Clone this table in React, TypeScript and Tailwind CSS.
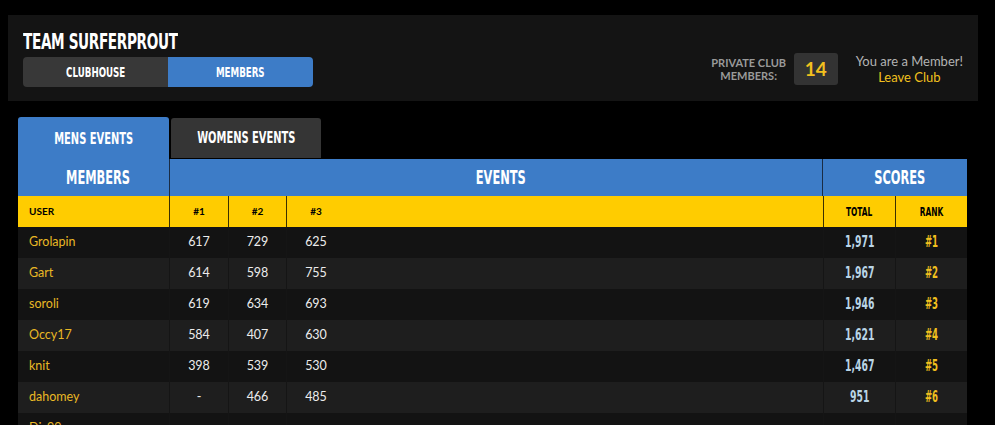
import React from "react";

const ROWS = [
  { name: "Grolapin", e: ["617", "729", "625"], total: "1,971", rank: "#1" },
  { name: "Gart", e: ["614", "598", "755"], total: "1,967", rank: "#2" },
  { name: "soroli", e: ["619", "634", "693"], total: "1,946", rank: "#3" },
  { name: "Occy17", e: ["584", "407", "630"], total: "1,621", rank: "#4" },
  { name: "knit", e: ["398", "539", "530"], total: "1,467", rank: "#5" },
  { name: "dahomey", e: ["-", "466", "485"], total: "951", rank: "#6" },
  { name: "Dj_99", e: ["", "", ""], total: "", rank: "" },
];

const cols = "grid grid-cols-[152px_59px_58px_58px_479px_72px_71px]";

const SCALE = {
  normal: "scale-x-[0.62]",
  tight: "scale-x-[0.57]",
};

// heavy condensed display type, squeezed from DejaVu Sans Bold
function Cond({
  children,
  left,
  tight,
}: {
  children: React.ReactNode;
  left?: boolean;
  tight?: boolean;
}) {
  return (
    <span
      className={`inline-block whitespace-nowrap font-['DejaVu_Sans',sans-serif] font-bold uppercase ${
        tight ? SCALE.tight : SCALE.normal
      } ${left ? "origin-left" : "origin-center"}`}
    >
      {children}
    </span>
  );
}

export default function App() {
  return (
    <div className="h-[425px] overflow-hidden bg-black font-['Lato',sans-serif]">
      {/* Club header */}
      <div className="mx-2 mt-[15px] w-[970px] h-[86px] bg-[#141414] flex justify-between px-[15px]">
        <div className="pt-[13px]">
          <h1 className="text-white text-[22px] leading-[25px] tracking-[-0.6px]">
            <Cond left>Team Surferprout</Cond>
          </h1>
          <div className="mt-[3px] flex w-[290px] h-[30px] rounded-[4px] overflow-hidden">
            <button className="w-[145px] bg-[#383838] text-white text-[14px] flex items-center justify-center">
              <Cond>Clubhouse</Cond>
            </button>
            <button className="w-[145px] bg-[#3d7cc7] text-white text-[14px] flex items-center justify-center">
              <Cond>Members</Cond>
            </button>
          </div>
        </div>
        <div className="flex items-center pt-[22px]">
          <div className="text-[#9a9a9a] text-[11px] leading-[13px] font-bold uppercase text-center w-[76px]">
            Private Club
            <br />
            Members:
          </div>
          <div className="ml-[7px] w-[44px] h-[32px] rounded-[3px] bg-[#333333] text-[#f2c01e] text-[19px] font-bold flex items-center justify-center">
            14
          </div>
          <div className="ml-[18px] text-center text-[13px] leading-[16px]">
            <div className="text-[#b3b3b3]">You are a Member!</div>
            <div className="text-[#f2c01e]">Leave Club</div>
          </div>
        </div>
      </div>

      {/* Table */}
      <div className="ml-[18px] mt-[16px] w-[949px]">
        <div className="flex items-end h-[42px]">
          <div className="w-[151px] h-[42px] bg-[#3d7cc7] rounded-t-[3px] text-white text-[16px] flex items-center justify-center pt-[1px]">
            <Cond>Mens Events</Cond>
          </div>
          <div className="ml-[2px] mb-[1px] w-[150px] h-[40px] bg-[#353535] rounded-t-[3px] text-white text-[16px] flex items-center justify-center">
            <Cond>Womens Events</Cond>
          </div>
        </div>
        <div className="flex h-[37px] bg-[#3d7cc7] text-white text-[20px]">
          <div className="w-[152px] flex items-center justify-center border-r border-[#1a2c44] pl-[10px] pb-[2px]">
            <Cond tight>Members</Cond>
          </div>
          <div className="w-[653px] flex items-center justify-center border-r border-[#1a2c44] pl-[10px] pb-[2px]">
            <Cond tight>Events</Cond>
          </div>
          <div className="flex-1 flex items-center justify-center pl-[10px] pb-[2px]">
            <Cond tight>Scores</Cond>
          </div>
        </div>
        <div className={`${cols} h-[31px] bg-[#ffcc00] text-black text-[10px] font-bold`}>
          <div className="flex items-center pl-[11px] border-r border-[#3a3000]">USER</div>
          <div className="flex items-center justify-center border-r border-[#3a3000]">#1</div>
          <div className="flex items-center justify-center border-r border-[#3a3000]">#2</div>
          <div className="flex items-center justify-center">#3</div>
          <div className="border-r border-[#3a3000]"></div>
          <div className="flex items-center justify-center border-r border-[#3a3000] text-[13px] pt-[1px]">
            <Cond tight>Total</Cond>
          </div>
          <div className="flex items-center justify-center text-[13px] pt-[1px]">
            <Cond tight>Rank</Cond>
          </div>
        </div>
        {ROWS.map((r, i) => (
          <div
            key={r.name}
            className={`${cols} h-[31px] text-[12.5px] ${i % 2 === 0 ? "bg-[#131313]" : "bg-[#1e1e1e]"}`}
          >
            <div className="flex items-center pl-[11px] text-[#e9b825] border-r border-[#151515]">{r.name}</div>
            {r.e.map((v, j) => (
              <div
                key={j}
                className={`flex items-center justify-center text-[#ececec] ${j < 2 ? "border-r border-[#151515]" : ""}`}
              >
                {v}
              </div>
            ))}
            <div className="border-r border-[#151515]"></div>
            <div className="flex items-center justify-center text-[#b9d5e6] text-[15px] border-r border-[#151515]">
              <Cond>{r.total}</Cond>
            </div>
            <div className="flex items-center justify-center text-[#f2c01e] text-[15px]">
              <Cond tight>{r.rank}</Cond>
            </div>
          </div>
        ))}
      </div>
    </div>
  );
}
